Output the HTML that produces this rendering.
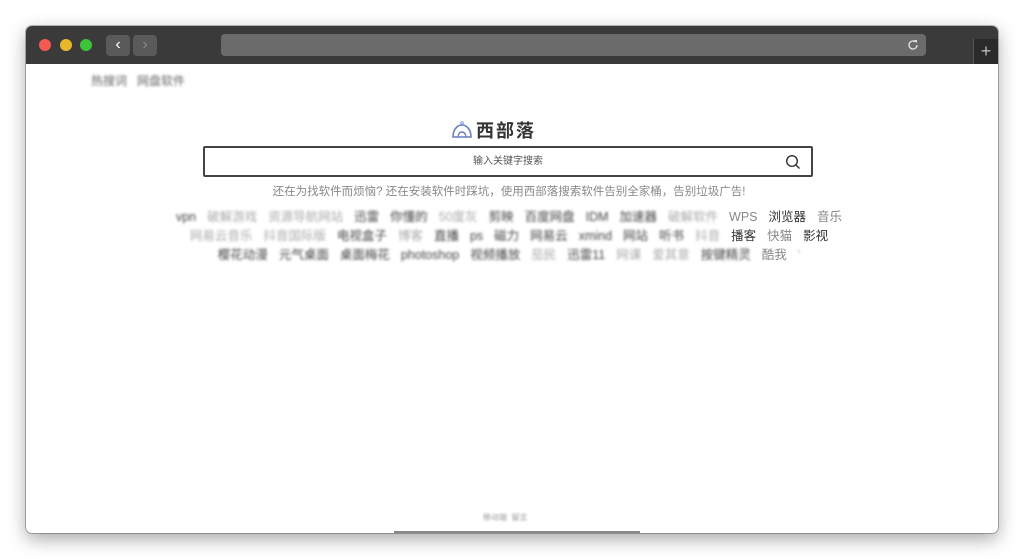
<!DOCTYPE html>
<html><head><meta charset="utf-8"><style>
*{margin:0;padding:0;box-sizing:border-box}
body{width:1024px;height:560px;background:#fff;position:relative;overflow:hidden;font-family:"Liberation Sans","Noto Sans CJK SC",sans-serif}
.win{position:absolute;left:26px;top:26px;width:972px;height:507px;background:#fff;border-radius:6px;box-shadow:0 6px 18px rgba(0,0,0,.35),0 0 0 1px rgba(0,0,0,.25);overflow:hidden}
.bar{position:absolute;left:0;top:0;width:972px;height:38px;background:#3a3a3a}
.dot{position:absolute;top:13px;width:12px;height:12px;border-radius:50%}
.nav{position:absolute;top:9px;width:24px;height:21px;background:#5a5a5a;border-radius:4px;color:#ddd;font-size:16px;text-align:center;line-height:20px}
.addr{position:absolute;left:195px;top:8px;width:705px;height:22px;background:#6b6b6b;border-radius:4px}
.plus{position:absolute;left:947px;top:13px;width:25px;height:25px;background:#2a2a2a;color:#bbb;font-size:18px;text-align:center;line-height:24px;border-left:1px solid #555}
.top{position:absolute;left:65px;top:46px;font-size:12px;color:#666;filter:blur(1.3px)}
.logo{position:absolute;left:425px;top:91px;font-size:18px;font-weight:bold;color:#333;letter-spacing:2px}
.search{position:absolute;left:177px;top:120px;width:610px;height:31px;border:2px solid #444;border-radius:2px;font-size:10px;color:#555;text-align:center;line-height:27px}
.tip{position:absolute;left:0;width:966px;top:157px;text-align:center;font-size:11.5px;color:#888}
.row{position:absolute;left:0;width:966px;text-align:center;font-size:12.5px;white-space:nowrap}
.row span{margin:0 5.5px}
.b{filter:blur(1.4px);color:#444}.l{filter:blur(1.4px);color:#aaa}.d{color:#333}.g{color:#888}
.foot{position:absolute;left:457px;top:486px;font-size:8px;color:#999;filter:blur(1px)}
.sb{position:absolute;left:368px;top:505px;width:246px;height:2px;background:#888}
</style></head><body>
<div class="win">
<div class="bar">
<div class="dot" style="left:13px;background:#f25a53"></div>
<div class="dot" style="left:34px;background:#e6b82c"></div>
<div class="dot" style="left:54px;background:#3fc33a"></div>
<div class="nav" style="left:80px;color:#fff">‹</div>
<div class="nav" style="left:107px;color:#888">›</div>
<div class="addr"><svg style="position:absolute;right:6px;top:4px" width="14" height="14" viewBox="0 0 14 14"><path d="M11 7a4 4 0 1 1-1.5-3.1" fill="none" stroke="#ddd" stroke-width="1.4"/><path d="M8 2h3v3z" fill="#ddd"/></svg></div>
<div class="plus">+</div>
</div>
<div class="top">热搜词 &nbsp; 网盘软件</div>
<div class="logo"><svg width="22" height="18" viewBox="0 0 22 18" style="vertical-align:-2px;margin-right:3px"><path d="M2 16C2 9 6 4 11 4s9 5 9 12z" fill="none" stroke="#6a7fc0" stroke-width="1.6"/><path d="M7 16c0-3 2-5 4-5s4 2 4 5" fill="none" stroke="#6a7fc0" stroke-width="1.4"/><circle cx="11" cy="2" r="1.3" fill="none" stroke="#8a9ad0"/></svg>西部落</div>
<div class="search">输入关键字搜索<svg style="position:absolute;right:10px;top:6px" width="16" height="16" viewBox="0 0 16 16"><circle cx="7" cy="7" r="5.3" fill="none" stroke="#333" stroke-width="1.4"/><path d="M11 11l3.5 3.5" stroke="#333" stroke-width="1.4"/></svg></div>
<div class="tip">还在为找软件而烦恼? 还在安装软件时踩坑，使用西部落搜索软件告别全家桶，告别垃圾广告!</div>
<div class="row" style="top:180px"><span class="b">vpn</span><span class="l">破解游戏</span><span class="l">资源导航网站</span><span class="b">迅雷</span><span class="b">你懂的</span><span class="l">50度灰</span><span class="b">剪映</span><span class="b">百度网盘</span><span class="b">IDM</span><span class="b">加速器</span><span class="l">破解软件</span><span class="g">WPS</span><span class="d">浏览器</span><span class="g">音乐</span></div>
<div class="row" style="top:199px"><span class="l">网易云音乐</span><span class="l">抖音国际版</span><span class="b">电视盒子</span><span class="l">博客</span><span class="b">直播</span><span class="b">ps</span><span class="b">磁力</span><span class="b">网易云</span><span class="b">xmind</span><span class="b">网站</span><span class="b">听书</span><span class="l">抖音</span><span class="d">播客</span><span class="g">快猫</span><span class="d">影视</span></div>
<div class="row" style="top:218px"><span class="b">樱花动漫</span><span class="b">元气桌面</span><span class="b">桌面梅花</span><span class="b">photoshop</span><span class="b">视频播放</span><span class="l">茄民</span><span class="b">迅雷11</span><span class="l">网课</span><span class="l">爱其意</span><span class="b">按键精灵</span><span class="g">酷我</span><span class="l">'</span></div>
<div class="foot">移动端 &nbsp;留言</div>
<div class="sb"></div>
</div>
</body></html>
